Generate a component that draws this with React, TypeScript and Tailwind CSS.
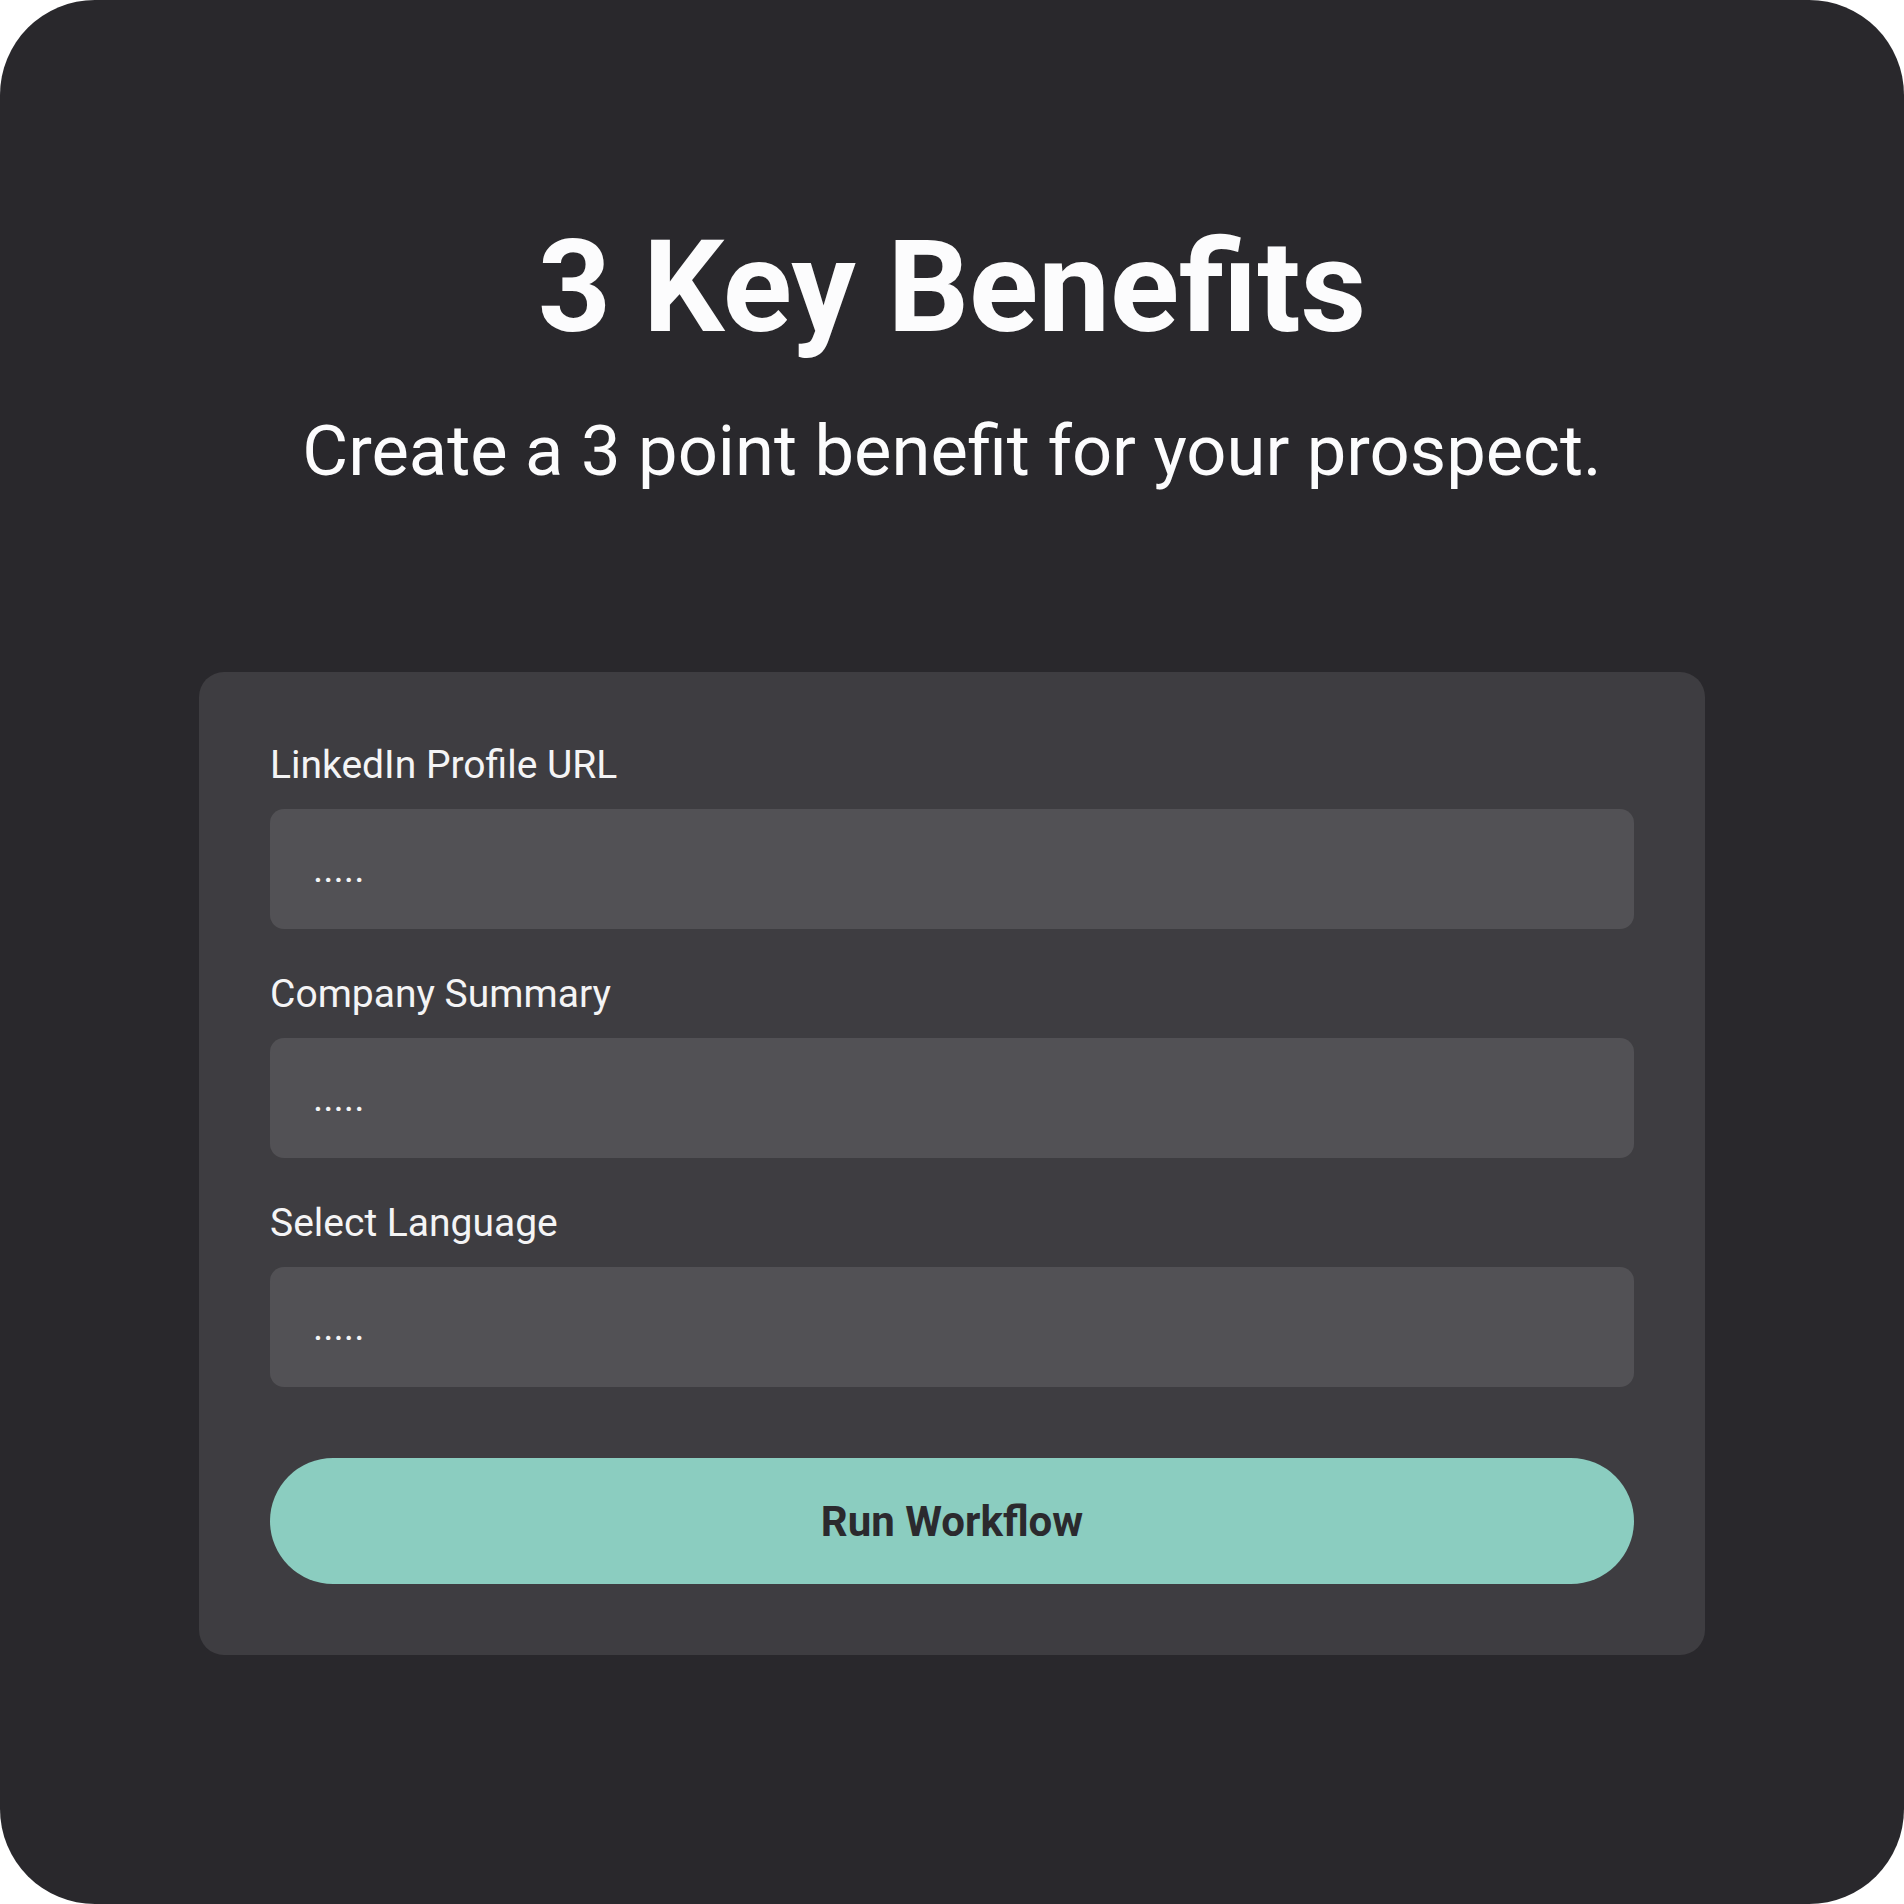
export default function App() {
  const fields = ["LinkedIn Profile URL", "Company Summary", "Select Language"];

  return (
    <div className="w-[1904px] h-[1904px] bg-white font-['Roboto',sans-serif]">
      <div className="w-full h-full bg-[#29282c] rounded-[95px] flex flex-col items-center pt-[209px]">
        <h1 className="text-[128px] leading-[156px] font-bold text-[#fcfcfd]">
          3 Key Benefits
        </h1>
        <p className="mt-[46px] text-[70.5px] leading-[80px] text-[#fcfcfd]">
          Create a 3 point benefit for your prospect.
        </p>

        <div className="mt-[181px] w-[1506px] bg-[#3e3d41] rounded-[25px] px-[71px] pt-[69px] pb-[71px] flex flex-col">
          <div className="flex flex-col gap-[41px]">
            {fields.map((label) => (
              <div key={label} className="flex flex-col gap-[20px]">
                <label className="text-[39px] leading-[48px] text-[#f4f4f5]">
                  {label}
                </label>
                <div className="h-[120px] bg-[#525155] rounded-[14px] flex items-center pl-[43px]">
                  <span className="text-[39px] leading-[48px] text-[#f4f4f5]">
                    .....
                  </span>
                </div>
              </div>
            ))}
          </div>
          <button className="mt-[71px] h-[126px] w-full rounded-full bg-[#8bcdc0] text-[42px] font-bold text-[#2b2a2e]">
            Run Workflow
          </button>
        </div>
      </div>
    </div>
  );
}
